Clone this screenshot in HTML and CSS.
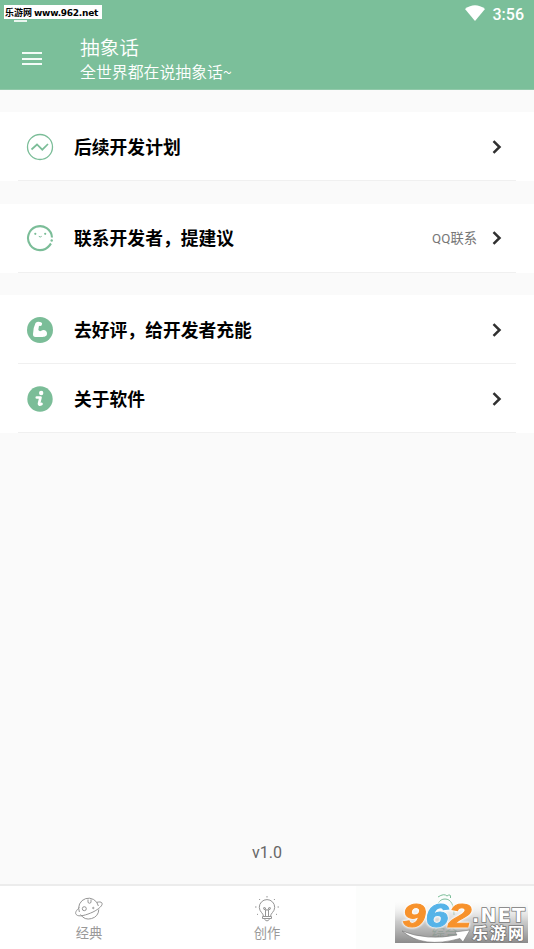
FILE: index.html
```html
<!DOCTYPE html>
<html lang="zh-CN">
<head>
<meta charset="utf-8">
<title>抽象话</title>
<link rel="stylesheet" href="styles.css">
</head>
<body>
<div class="app">
  <header class="header">
    <div class="site-tag">乐游网 <span class="site-url">www.962.net</span></div>
    <div class="status">
      <svg class="wifi" viewBox="0 0 20 16"><path d="M0 4Q10-3.500 20 4L10 16Z" fill="#fff"/></svg>
      <span class="clock">3:56</span>
    </div>
    <div class="toolbar">
      <div class="menu"><i></i><i></i><i></i></div>
      <div class="titles">
        <h1>抽象话</h1>
        <p>全世界都在说抽象话<span class="tilde">~</span></p>
      </div>
    </div>
  </header>

  <main class="content">
    <section class="group">
      <div class="row">
        <svg class="icon" viewBox="0 0 28 28" fill="none" stroke="#7bbd98"><circle cx="14" cy="14" r="12.500" stroke-width="1.300"/><path d="M5.500 16.500L11 11.500L16.300 16.700L22 11" stroke-width="1.700"/></svg>
        <span class="label">后续开发计划</span>
        <svg class="chevron" viewBox="0 0 10 14"><path d="M1.500 1.200L7.500 7L1.500 12.800"/></svg>
      </div>
    </section>
    <section class="group">
      <div class="row">
        <svg class="icon" viewBox="0 0 28 28" fill="none" stroke="#7bbd98"><path d="M26 13.500A12 12 0 1 0 23.500 21.500L25 19.500" stroke-width="2.100"/><g fill="#7bbd98" stroke="none"><circle cx="9.300" cy="9.800" r="1.100"/><circle cx="19.200" cy="9.800" r="1.100"/><circle cx="25.700" cy="16.500" r="1.200"/></g><path d="M12.800 12.300Q14.300 13.700 15.700 12.300" stroke-width="1"/></svg>
        <span class="label">联系开发者，提建议</span>
        <span class="note">QQ联系</span>
        <svg class="chevron" viewBox="0 0 10 14"><path d="M1.500 1.200L7.500 7L1.500 12.800"/></svg>
      </div>
    </section>
    <section class="group">
      <div class="row">
        <svg class="icon" viewBox="0 0 28 28"><circle cx="14" cy="14" r="13" fill="#7bbd98"/><path d="M9.500 7Q11.500 5 15 6.200Q16.800 7 15.800 9Q15.200 10.400 13 9.800L12.300 14Q13.500 15.800 15.300 14.800C17.500 12.800 21.300 14.500 21 17.800C20.800 20.500 18.500 21 15.500 21H9.500Q6.800 20.800 7 18Q7.200 11.500 9.500 7Z" fill="#fff"/></svg>
        <span class="label">去好评，给开发者充能</span>
        <svg class="chevron" viewBox="0 0 10 14"><path d="M1.500 1.200L7.500 7L1.500 12.800"/></svg>
      </div>
      <div class="row">
        <svg class="icon" viewBox="0 0 28 28"><circle cx="14" cy="14" r="12.700" fill="#7bbd98"/><circle cx="15.200" cy="8" r="2.200" fill="#fff"/><path d="M10.800 12.500H14.500L13 18.500Q12.800 20.500 15.500 19" fill="none" stroke="#fff" stroke-width="2.700" stroke-linejoin="round" stroke-linecap="round"/></svg>
        <span class="label">关于软件</span>
        <svg class="chevron" viewBox="0 0 10 14"><path d="M1.500 1.200L7.500 7L1.500 12.800"/></svg>
      </div>
    </section>
    <div class="version">v1.0</div>
  </main>

  <nav class="tabs">
    <div class="tab">
      <svg class="tab-icon" viewBox="0 0 28 26" fill="none" stroke="#969696" stroke-width="1"><path d="M4.400 16A10 10 0 1 1 23.400 10M5.500 18.500A10 10 0 0 0 23.800 13.500"/><path d="M4.500 11.500C1 14.500-.2 17 1.200 18.500C3.500 21.500 11.500 19 18 16C24 13 28.500 9 26.800 6.800C26 5.700 24 5.800 21.700 6.400"/><circle cx="9.300" cy="12.700" r="2"/><path d="M13 3.500V6.500Q14.500 8 16 6.500V3.500"/><circle cx="18.300" cy="12" r=".7"/></svg>
      <span>经典</span>
    </div>
    <div class="tab">
      <svg class="tab-icon" viewBox="0 0 28 26" fill="none" stroke="#969696" stroke-width="1"><path d="M10.500 20.500C10.500 17 6.300 16 6.300 11.300A7.700 7.700 0 0 1 21.700 11.300C21.700 16 17.500 17 17.500 20.500Z"/><path d="M9.500 20.500H18.500V22.500H9.500ZM11.500 23.500Q14 26.500 16.500 23.500M12.500 20V14Q10 13.500 10.700 11.700Q12.500 10.500 13 14H15Q15.500 10.500 17.300 11.700Q18 13.500 15.500 14V20"/><path d="M14 0V1.500M6.200 3L7 4M21.800 3L21 4M2 11H3.500M24.500 11H26M4 18.700L5 18M24 18.700L23 18"/></svg>
      <span>创作</span>
    </div>
    <div class="tab tab-current">
      <svg class="tab-icon" viewBox="0 0 28 26" fill="none" stroke="#7bbd98" stroke-width="1"><path d="M5 19C5 9 8 3 14 3C20 3 23 9 23 19M7 1Q13-3 16 0Q20-3 19.500 2"/></svg>
      <span>综合</span>
    </div>
  </nav>

  <svg class="watermark" viewBox="0 0 133 43">
    <defs>
      <linearGradient id="shade" x1="0" y1="0" x2="0" y2="1"><stop offset="0" stop-color="#fff" stop-opacity=".1"/><stop offset=".5" stop-color="#bbb" stop-opacity=".75"/><stop offset="1" stop-color="#777" stop-opacity=".85"/></linearGradient>
    </defs>
    <rect width="133" height="43" fill="url(#shade)"/>
    <path d="M7 31Q32 41 62 35L60 32L75 30L68 42L65 38.500Q28 49 7 31Z" fill="#fff" stroke="#777" stroke-width=".6"/>
    <g class="digits">
      <text x="7.500" y="27" textLength="23" lengthAdjust="spacingAndGlyphs" fill="#f7922c" stroke="#f7922c">9</text>
      <text x="30.500" y="27" textLength="23" lengthAdjust="spacingAndGlyphs" fill="#55b3e8" stroke="#55b3e8">6</text>
      <text x="53.500" y="27" textLength="23" lengthAdjust="spacingAndGlyphs" fill="#f7922c" stroke="#f7922c">2</text>
    </g>
    <text class="net" x="77" y="22" textLength="53" lengthAdjust="spacing">.NET</text>
    <text class="brand" x="77" y="39" textLength="52">乐游网</text>
  </svg>
</div>
</body>
</html>
```
FILE: styles.css
```css
* { box-sizing: border-box; }
body {
  margin: 0;
  font-family: Roboto, "Noto Sans CJK SC", sans-serif;
  background: #fafafa;
}
.app {
  position: relative;
  width: 534px;
  height: 949px;
  display: flex;
  flex-direction: column;
  overflow: hidden;
}
.header {
  position: relative;
  height: 90px;
  flex: none;
  background: #7bbf9a;
  border-bottom: 1px solid #92c9aa;
  color: #fff;
}
.site-tag {
  position: absolute;
  left: 4px;
  top: 5px;
  width: 98px;
  height: 14px;
  padding-left: 1px;
  background: #fff;
  color: #000;
  font: bold 9px/15px "Noto Sans CJK SC", sans-serif;
  white-space: nowrap;
}
.site-tag::after {
  content: "";
  position: absolute;
  left: 10px;
  top: 15px;
  width: 13px;
  height: 2px;
  background: #e9f5ee;
}
.site-url { font-family: "DejaVu Sans", sans-serif; font-size: 9px; letter-spacing: -.25px; }
.status {
  height: 28px;
  display: flex;
  justify-content: flex-end;
  align-items: center;
  padding-right: 10px;
  gap: 8px;
}
.wifi { width: 20px; height: 16px; margin-top: -2px; }
.clock { font-size: 16px; font-weight: 500; line-height: 28px; padding-top: 1px; }
.toolbar { display: flex; height: 61px; padding-left: 22px; }
.menu { width: 20px; margin: 24px 38px 0 0; display: flex; flex-direction: column; gap: 3.500px; }
.menu i { height: 2px; background: #f4fbf7; }
.titles { padding-top: 8px; }
.titles h1 { margin: 0; font-size: 19.700px; line-height: 25px; font-weight: 350; }
.titles p { margin: 0; font-size: 15.900px; line-height: 21px; font-weight: 350; }
.tilde { font-family: "Noto Sans CJK SC", sans-serif; }
.content { flex: 1; padding-top: 22px; display: flex; flex-direction: column; }
.group { background: #fff; margin-bottom: 22.500px; }
.row {
  position: relative;
  height: 69.100px;
  display: flex;
  align-items: center;
  padding: 0 32px 0 26px;
}
.row::after {
  content: "";
  position: absolute;
  left: 18px;
  right: 18px;
  bottom: 0;
  height: 1px;
  background: #f0f0f0;
}
.icon { width: 28px; height: 28px; margin-right: 20px; flex: none; }
.label { flex: 1; padding-top: 2px; font-size: 17.800px; font-weight: 700; color: #000; line-height: 26px; }
.note { font-size: 13.300px; color: #777; margin-right: 15px; padding-bottom: 1px; }
.chevron { width: 10px; height: 14px; flex: none; fill: none; stroke: #303030; stroke-width: 2.500; }
.version {
  margin-top: auto;
  height: 65px;
  font-size: 16px;
  line-height: 68px;
  text-align: center;
  color: #666;
}
.tabs {
  height: 65px;
  flex: none;
  display: flex;
  background: #fff;
  border-top: 2px solid #ececec;
}
.tab {
  flex: 1;
  display: flex;
  flex-direction: column;
  align-items: center;
  padding-top: 10px;
  color: #999;
  font-size: 13.300px;
  line-height: 22px;
}
.tab-current { color: #7bbd98; background: #fcfdfc; }
.tab-icon { width: 28px; height: 26px; margin-bottom: 1px; overflow: visible; }
.watermark { position: absolute; left: 395px; top: 900px; width: 133px; height: 43px; }
.digits {
  font: italic bold 33px "Liberation Sans", sans-serif;
  stroke-width: 1px;
  filter: drop-shadow(0 0 1px #fff) drop-shadow(0 0 1px #fff);
}
.net {
  font: bold 19px "DejaVu Sans", sans-serif;
  fill: #fff;
  stroke: #777;
  stroke-width: 1.500px;
  paint-order: stroke;
}
.brand {
  font: bold 16px "Noto Sans CJK SC", sans-serif;
  fill: #fff;
  stroke: #777;
  stroke-width: 1.500px;
  paint-order: stroke;
}
```
